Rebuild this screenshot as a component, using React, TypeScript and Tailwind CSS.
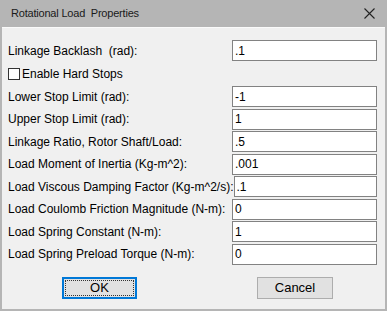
const rows: { label: string; value: string }[] = [
  { label: "Lower Stop Limit (rad):", value: "-1" },
  { label: "Upper Stop Limit (rad):", value: "1" },
  { label: "Linkage Ratio, Rotor Shaft/Load:", value: ".5" },
  { label: "Load Moment of Inertia (Kg-m^2):", value: ".001" },
  { label: "Load Viscous Damping Factor (Kg-m^2/s):", value: ".1" },
  { label: "Load Coulomb Friction Magnitude (N-m):", value: "0" },
  { label: "Load Spring Constant (N-m):", value: "1" },
  { label: "Load Spring Preload Torque (N-m):", value: "0" },
];

function Field({ label, value }: { label: string; value: string }) {
  return (
    <div className="flex items-center h-[21px]">
      <span className="flex-1 whitespace-pre">{label}</span>
      <div className="w-[145px] h-[21px] border border-[#828282] bg-white pl-[2px] flex items-center">
        {value}
      </div>
    </div>
  );
}

export default function App() {
  return (
    <div
      className="w-[387px] h-[311px] bg-[#b5b5b5] flex flex-col px-[2px] pb-[2px] text-[12px] text-black"
      style={{ fontFamily: '"Liberation Sans", Arial, sans-serif' }}
    >
      <div className="h-[27px] flex items-center pl-[9px] pr-[9px] shrink-0">
        <span className="flex-1 text-[11px] tracking-[-0.2px] text-[#1a1a1a] whitespace-pre">Rotational Load  Properties</span>
        <svg width="11" height="11" viewBox="0 0 11 11" className="mr-[1px]">
          <path d="M0.5 0.5 L10.5 10.5 M10.5 0.5 L0.5 10.5" stroke="#222" strokeWidth="1.1" />
        </svg>
      </div>
      <div className="flex-1 bg-[#f0f0f0] border-t border-[#fafafa] pl-[6px] pr-[8px] pt-[12px] flex flex-col">
        <Field label="Linkage Backlash  (rad):" value=".1" />
        <div className="h-[25px] flex items-center">
          <span className="w-[12px] h-[12px] border border-[#333] bg-white mr-[2px]" />
          <span>Enable Hard Stops</span>
        </div>
        <div className="flex flex-col gap-[1.5px]">
          {rows.map((r) => (
            <Field key={r.label} label={r.label} value={r.value} />
          ))}
        </div>
        <div className="flex mt-[12px] text-[13px]">
          <div className="ml-[54px] w-[75px] h-[22px] border-2 border-[#0078d7] bg-[#e1e1e1] p-[1px]">
            <div className="w-full h-full border border-dotted border-[#333] flex items-center justify-center">
              OK
            </div>
          </div>
          <div className="ml-[120px] w-[76px] h-[22px] border border-[#adadad] bg-[#e1e1e1] flex items-center justify-center">
            Cancel
          </div>
        </div>
      </div>
    </div>
  );
}
